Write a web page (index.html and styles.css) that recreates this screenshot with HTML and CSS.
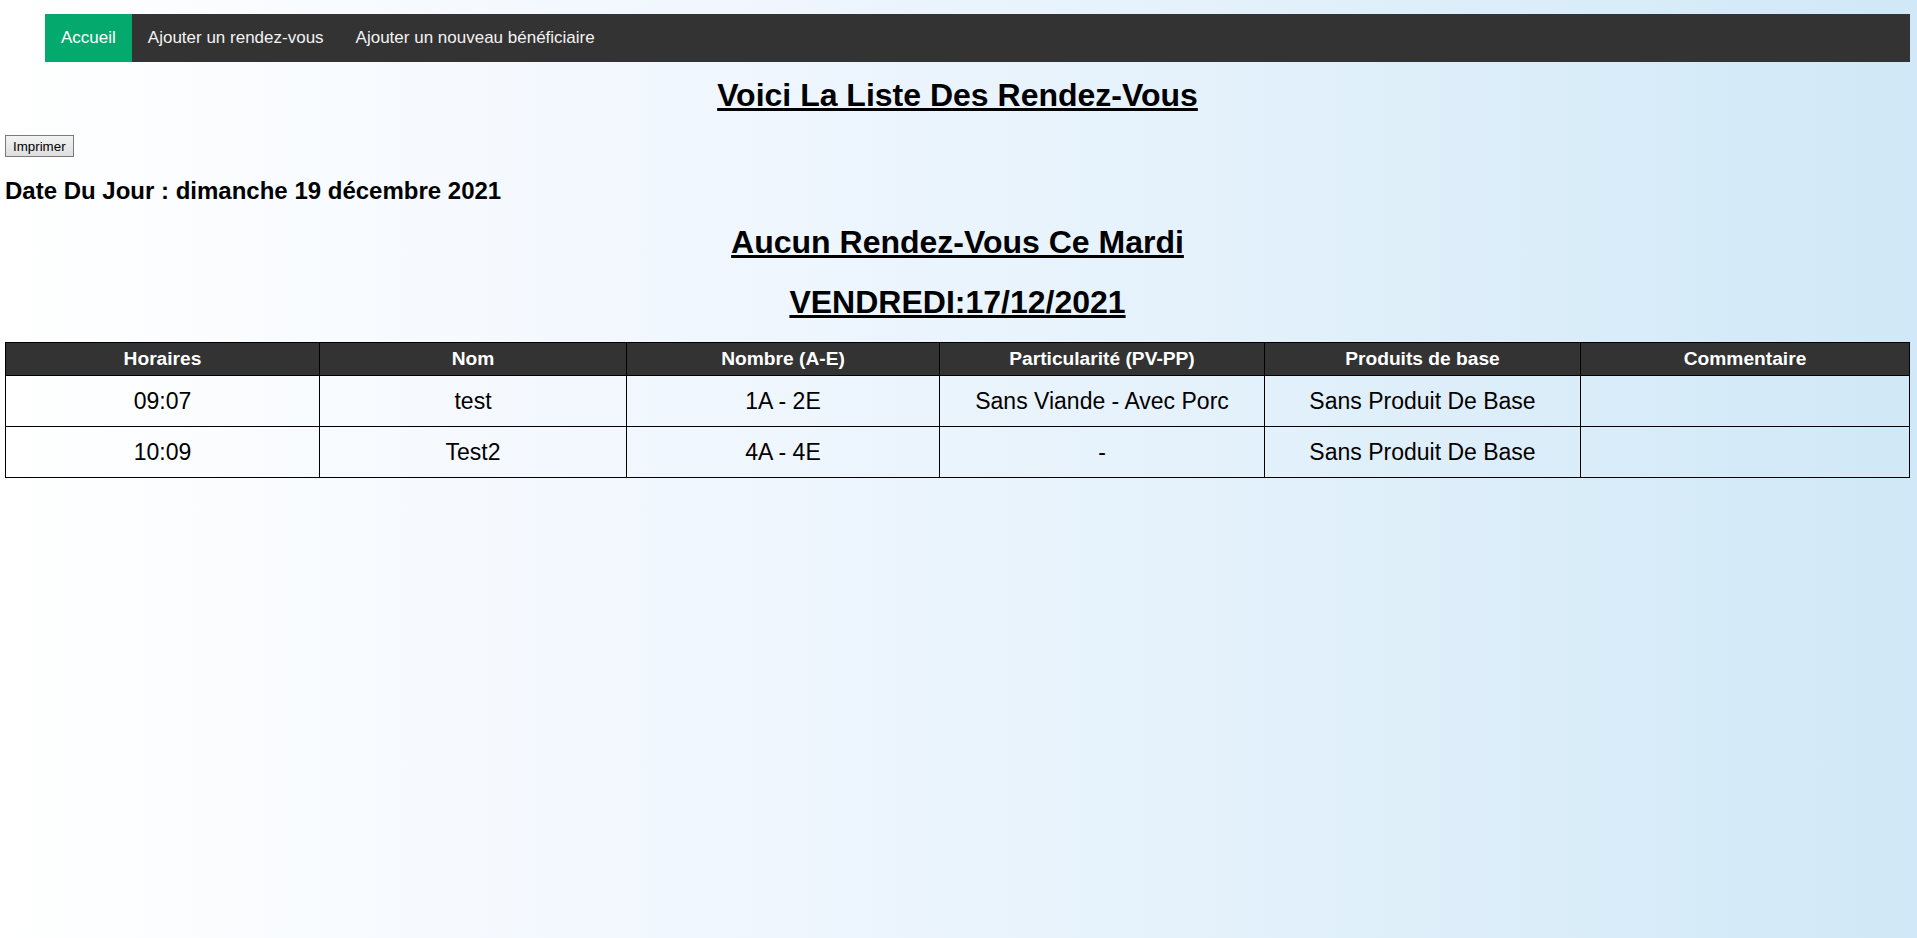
FILE: index.html
```html
<!DOCTYPE html>
<html lang="fr">
<head>
<meta charset="utf-8">
<title>Liste des rendez-vous</title>
<link rel="stylesheet" href="styles.css">
</head>
<body>
<div class="page">
  <nav class="topnav">
    <a class="active" href="#">Accueil</a>
    <a href="#">Ajouter un rendez-vous</a>
    <a href="#">Ajouter un nouveau bénéficiaire</a>
  </nav>
  <h1 class="title first">Voici La Liste Des Rendez-Vous</h1>
  <div class="print-line"><button class="print-btn" type="button">Imprimer</button></div>
  <h2 class="date">Date Du Jour : dimanche 19 décembre 2021</h2>
  <h1 class="title none">Aucun Rendez-Vous Ce Mardi</h1>
  <h1 class="title day">VENDREDI:17/12/2021</h1>
  <table class="rdv">
    <colgroup>
      <col class="c1"><col class="c2"><col class="c3"><col class="c4"><col class="c5"><col class="c6">
    </colgroup>
    <thead>
      <tr>
        <th>Horaires</th>
        <th>Nom</th>
        <th>Nombre (A-E)</th>
        <th>Particularité (PV-PP)</th>
        <th>Produits de base</th>
        <th>Commentaire</th>
      </tr>
    </thead>
    <tbody>
      <tr>
        <td>09:07</td>
        <td>test</td>
        <td>1A - 2E</td>
        <td>Sans Viande - Avec Porc</td>
        <td>Sans Produit De Base</td>
        <td></td>
      </tr>
      <tr>
        <td>10:09</td>
        <td>Test2</td>
        <td>4A - 4E</td>
        <td>-</td>
        <td>Sans Produit De Base</td>
        <td></td>
      </tr>
    </tbody>
  </table>
</div>
</body>
</html>
```

FILE: styles.css
```css
html, body {
  margin: 0;
  padding: 0;
}
body {
  min-height: 938px;
  background: linear-gradient(to right, #ffffff 0%, #eff6fe 40%, #e3f1fb 65%, #d0e8f7 100%);
  font-family: "Liberation Sans", Arial, sans-serif;
  color: #000;
}
.page {
  padding: 14px 7px 0 5px;
}
.topnav {
  display: flex;
  margin-left: 40px;
  background-color: #333333;
}
.topnav a {
  display: block;
  color: #f2f2f2;
  text-align: center;
  padding: 14px 16px;
  text-decoration: none;
  font-size: 17px;
  line-height: 20px;
}
.topnav a.active {
  background-color: #04aa6d;
  color: #ffffff;
}
.title {
  font-size: 32px;
  font-weight: bold;
  text-align: center;
  text-decoration: underline;
  margin: 21px 0;
  line-height: 37px;
}
.title.first {
  margin-top: 15px;
}
.title.none {
  margin-top: 19px;
  margin-bottom: 23px;
}
.title.day {
  margin-top: 23px;
  margin-bottom: 21px;
}
.print-line {
  line-height: 22px;
  height: 22px;
}
.print-btn {
  font-family: "Liberation Sans", Arial, sans-serif;
  font-size: 13.333px;
  color: #000;
  padding: 1px 7px;
  height: 22px;
  border: 1px solid #7a7a7a;
  border-radius: 0;
  background: linear-gradient(#f3f3f3, #dedede);
  vertical-align: top;
}
.date {
  font-size: 24px;
  font-weight: bold;
  margin: 20px 0 19px;
  line-height: 28px;
}
.rdv {
  width: 100%;
  border-collapse: collapse;
  table-layout: fixed;
}
.rdv .c1 { width: 314px; }
.rdv .c2 { width: 307px; }
.rdv .c3 { width: 313px; }
.rdv .c4 { width: 325px; }
.rdv .c5 { width: 316px; }
.rdv .c6 { width: auto; }
.rdv th, .rdv td {
  border: 1px solid #000;
  text-align: center;
}
.rdv th {
  background-color: #333333;
  color: #ffffff;
  font-size: 19.2px;
  font-weight: bold;
  line-height: 22px;
  padding: 5px 4px;
}
.rdv td {
  font-size: 23px;
  line-height: 28px;
  padding: 11px 4px;
}
```
